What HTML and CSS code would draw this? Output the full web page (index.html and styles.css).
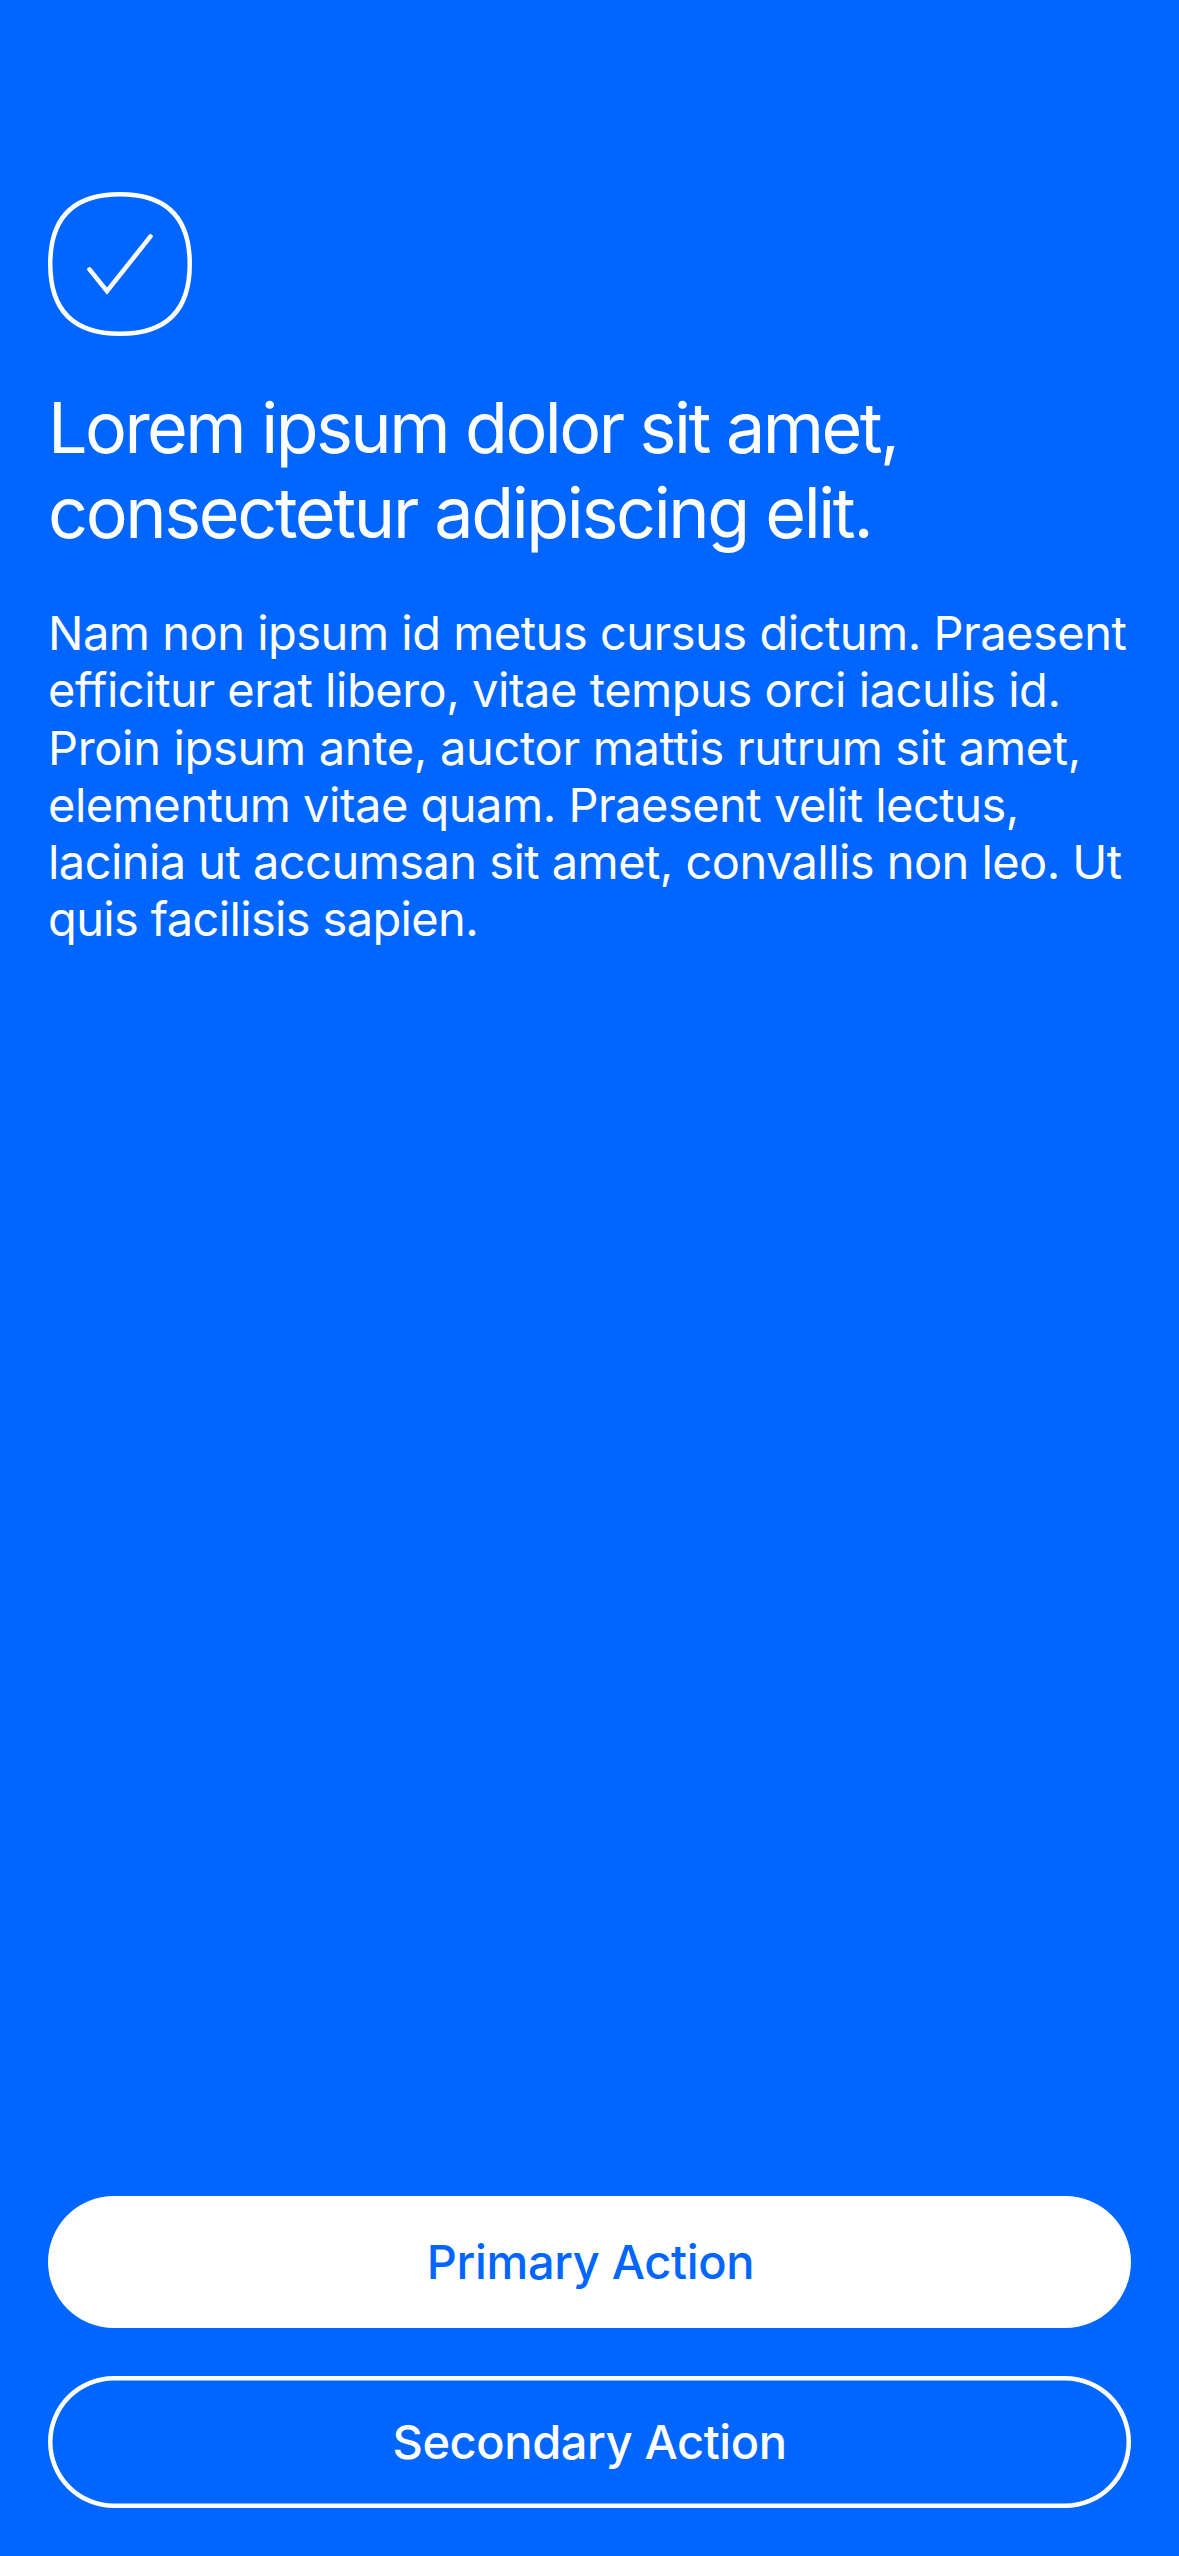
FILE: index.html
```html
<!DOCTYPE html>
<html lang="en">
<head>
<meta charset="utf-8">
<title>Feedback</title>
<link rel="stylesheet" href="styles.css">
</head>
<body>
<main class="screen">
  <section class="content">
    <svg class="icon" viewBox="0 0 144 144" fill="none" stroke="#fff" stroke-width="4.5">
      <path d="M72 2.25C118.5 2.25 141.75 25.5 141.75 72S118.5 141.75 72 141.75S2.25 118.5 2.25 72S25.5 2.25 72 2.25Z"/>
      <path d="M41.5 77.3L59 99.2L102.5 44.4" stroke-linecap="round"/>
    </svg>
    <h1 class="title"><span class="t1">Lorem ipsum dolor sit amet,</span><span class="t2">consectetur adipiscing elit.</span></h1>
    <p class="body">
      <span class="b1">Nam non ipsum id metus cursus dictum. Praesent</span>
      <span class="b2">efficitur erat libero, vitae tempus orci iaculis id.</span>
      <span class="b3">Proin ipsum ante, auctor mattis rutrum sit amet,</span>
      <span class="b4">elementum vitae quam. Praesent velit lectus,</span>
      <span class="b5">lacinia ut accumsan sit amet, convallis non leo. Ut</span>
      <span class="b6">quis facilisis sapien.</span>
    </p>
  </section>
  <footer class="actions">
    <button class="button primary">Primary Action</button>
    <button class="button secondary">Secondary Action</button>
  </footer>
</main>
</body>
</html>
```

FILE: styles.css
```css
* { box-sizing: border-box; }
body { margin: 0; background: #0066ff; color: #fff; font-family: Inter, "Liberation Sans", sans-serif; }
.screen { display: flex; flex-direction: column; justify-content: space-between; height: 2556px; padding: 192px 48px 48px; }
.content { display: flex; flex-direction: column; align-items: flex-start; }
.icon { display: block; width: 144px; height: 144px; }
.title { margin: 49px 0 0; font-size: 70px; line-height: 85px; font-weight: 400; white-space: nowrap; }
.title span, .body span { display: block; }
.t1 { letter-spacing: -2.55px; }
.t2 { letter-spacing: -2.35px; }
.body { margin: 49px 0 0; font-size: 47px; line-height: 57px; white-space: nowrap; font-feature-settings: "calt" 0; }
.b1 { letter-spacing: -0.5px; }
.b2 { letter-spacing: -0.47px; }
.b3 { letter-spacing: -0.33px; margin-top: 1px; }
.b4 { letter-spacing: -0.5px; }
.b5 { letter-spacing: -0.56px; }
.b6 { letter-spacing: -0.65px; }
.actions { display: flex; flex-direction: column; gap: 48px; }
.button { height: 132px; border: 0; border-radius: 66px; font: 500 47px/57px Inter, "Liberation Sans", sans-serif; padding: 0 0 1px; }
.primary { background: #fff; color: #0066ff; letter-spacing: -0.35px; padding-left: 2px; }
.secondary { background: transparent; box-shadow: inset 0 0 0 4.5px #fff; color: #fff; letter-spacing: -0.4px; }
```
